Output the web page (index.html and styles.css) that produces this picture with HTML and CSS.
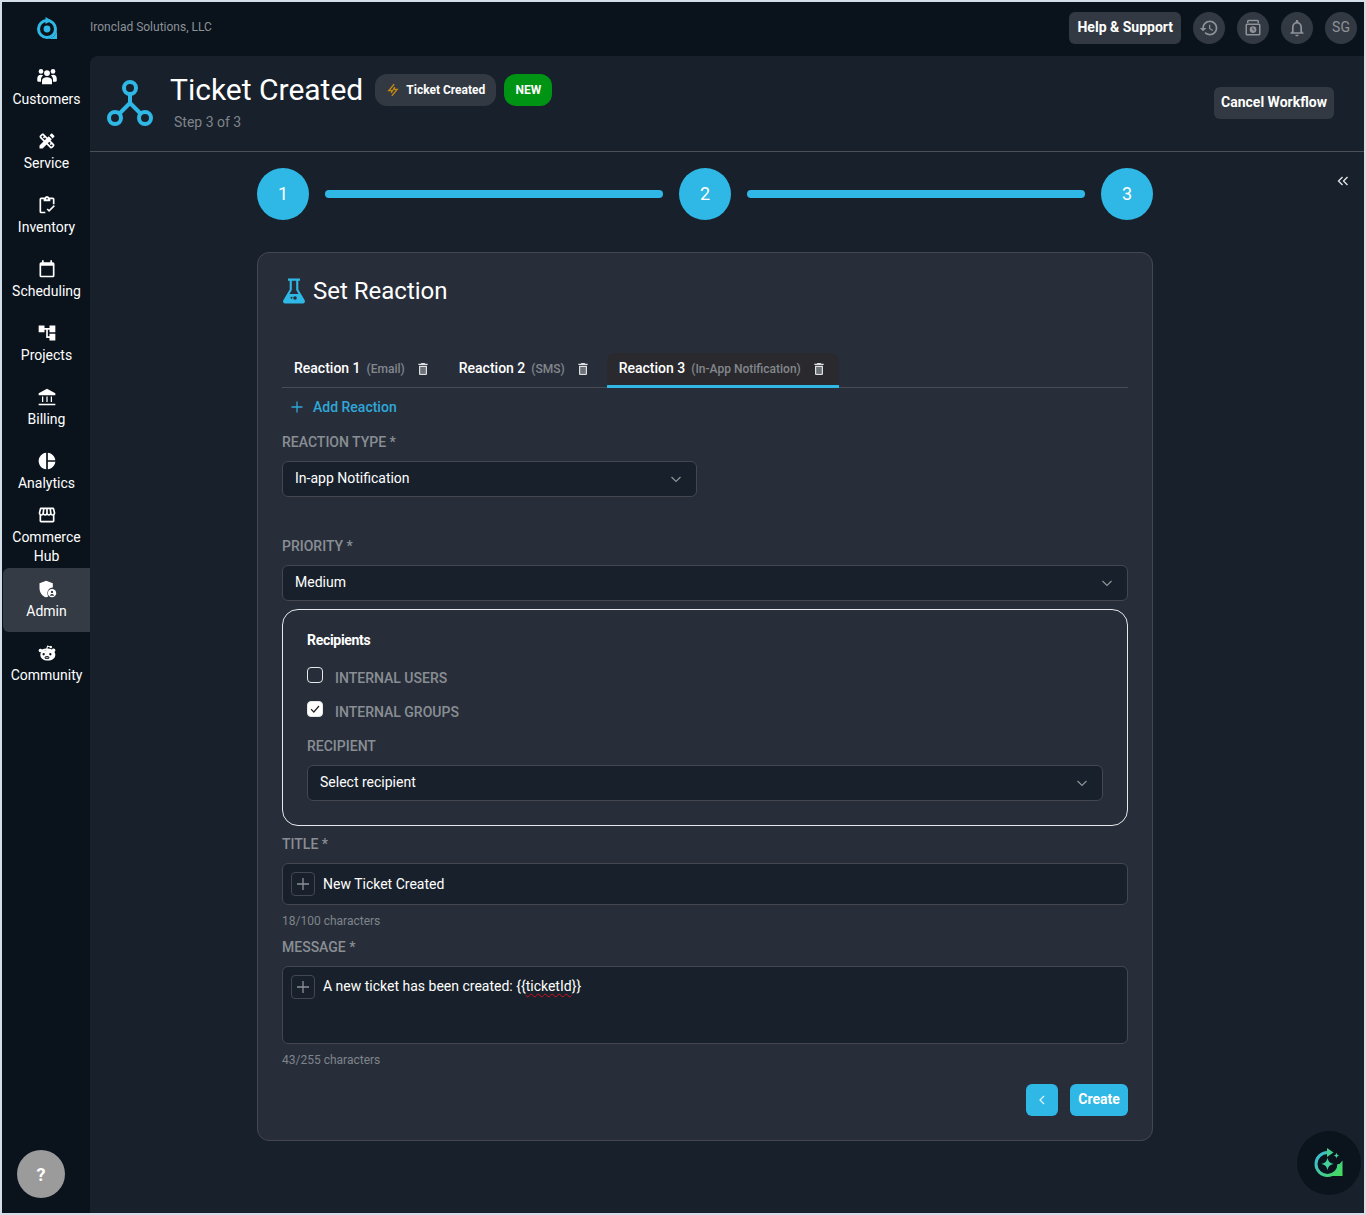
FILE: index.html
```html
<!DOCTYPE html>
<html lang="en">
<head>
<meta charset="utf-8">
<title>Ticket Created</title>
<link rel="stylesheet" href="styles.css">
</head>
<body>
<div class="app">
  <aside class="sidebar">
    <div class="logo">
      <svg width="24" height="26" viewBox="0 0 24 26"><circle cx="12" cy="13" r="8.500" fill="none" stroke="#2fb8e6" stroke-width="3"/><circle cx="12" cy="13" r="3.400" fill="#2fb8e6"/><path d="M10.500 1 16.500 4.500 10.500 8z" fill="#2fb8e6"/><path d="M22 13V23H12a10 10 0 0 0 10-10z" fill="#2fb8e6"/></svg>
    </div>
    <nav class="nav">
      <a class="nav-item nav-item-up"><svg class="nav-icon" viewBox="0 0 24 24"><circle cx="12" cy="8.500" r="3.500"/><circle cx="4.800" cy="6.500" r="2.800"/><circle cx="19.200" cy="6.500" r="2.800"/><path d="M12 13.500c3 0 6 1.500 6 4v4.500H6v-4.500c0-2.500 3-4 6-4z"/><path d="M4.500 10.500c1 0 2 .3 2.900.9C5.800 12.500 4.800 14 4.800 16v3H1.800A1.500 1.500 0 0 1 .3 17.500V15c0-2.600 1.800-4.500 4.200-4.500zM19.500 10.500c-1 0-2 .3-2.900.9 1.600 1.100 2.600 2.600 2.600 4.600v3h3a1.500 1.500 0 0 0 1.500-1.500V15c0-2.600-1.800-4.500-4.200-4.500z"/></svg><span>Customers</span></a>
      <a class="nav-item"><svg class="nav-icon" viewBox="0 0 24 24"><path d="M16.240 11.510l1.570-1.570-3.750-3.750-1.570 1.570-4.140-4.130c-.78-.78-2.050-.78-2.830 0l-1.900 1.900c-.78.78-.78 2.050 0 2.830l4.130 4.130L3 17.250V21h3.750l4.760-4.760 4.130 4.130c.95.95 2.230.6 2.830 0l1.900-1.900c.78-.78.78-2.050 0-2.830l-4.130-4.130zm-7.060-.44L5.040 6.940l1.890-1.900L8.200 6.310 7.020 7.500l1.410 1.410 1.190-1.190 1.450 1.450-1.890 1.900zm7.880 7.890l-4.130-4.130 1.900-1.900 1.450 1.450-1.190 1.190 1.410 1.410 1.190-1.190 1.270 1.270-1.900 1.900zM20.710 7.040c.39-.39.39-1.020 0-1.410l-2.340-2.340c-.47-.47-1.120-.29-1.410 0l-1.830 1.830 3.750 3.750 1.830-1.830z"/></svg><span>Service</span></a>
      <a class="nav-item"><svg class="nav-icon" viewBox="0 0 24 24"><path d="M10 20H5V5h3v2.500h8V5h3v6h2V5a2 2 0 0 0-2-2h-4.200a3 3 0 0 0-5.600 0H5a2 2 0 0 0-2 2v15a2 2 0 0 0 2 2h5z"/><circle cx="12" cy="4.500" r="1" fill="#0a131c"/><path d="m14.500 20.500-3-3 1.400-1.400 1.600 1.600 5.600-5.600 1.400 1.400z"/></svg><span>Inventory</span></a>
      <a class="nav-item"><svg class="nav-icon" viewBox="0 0 24 24"><path d="M19 4h-1V1.500h-2V4H8V1.500H6V4H5a2 2 0 0 0-2 2v14a2 2 0 0 0 2 2h14a2 2 0 0 0 2-2V6a2 2 0 0 0-2-2zm0 16H5V8h14z"/></svg><span>Scheduling</span></a>
      <a class="nav-item"><svg class="nav-icon" viewBox="0 0 24 24"><path d="M22 11V3h-7v3H9V3H2v8h7V8h2v10h4v3h7v-8h-7v3h-2V8h2v3z"/></svg><span>Projects</span></a>
      <a class="nav-item"><svg class="nav-icon" viewBox="0 0 24 24"><path d="M12 2 2 7.500V10h20V7.500zM6 11.500h1.500V18H6zm5.250 0h1.500V18h-1.500zm5.250 0H18V18h-1.500zM2 20h20v1.800H2z"/></svg><span>Billing</span></a>
      <a class="nav-item"><svg class="nav-icon" viewBox="0 0 24 24"><path d="M11 2v20c-5.070-.5-9-4.790-9-10s3.930-9.500 9-10zm2.030 0v8.990H22c-.47-4.740-4.240-8.520-8.970-8.990zm0 11.010V22c4.740-.47 8.500-4.250 8.970-8.990h-8.970z"/></svg><span>Analytics</span></a>
      <a class="nav-item"><svg class="nav-icon" viewBox="0 0 24 24"><path d="M21.900 8.890l-1.050-4.370c-.22-.9-1-1.520-1.910-1.520H5.050c-.9 0-1.690.63-1.900 1.520L2.100 8.890c-.24 1.020-.02 2.060.62 2.880.08.11.19.19.28.29V19c0 1.100.9 2 2 2h14c1.100 0 2-.9 2-2v-6.940c.09-.09.2-.18.28-.28.64-.82.87-1.870.62-2.890zm-2.990-3.900l1.050 4.370c.1.42.01.84-.25 1.170-.14.18-.44.47-.94.47-.61 0-1.140-.49-1.210-1.140L16.980 5l1.930-.01zM13 5h1.960l.54 4.520c.05.39-.07.78-.33 1.070-.22.26-.54.41-.95.41-.67 0-1.220-.59-1.220-1.310V5zM8.490 9.520L9.040 5H11v4.690c0 .72-.55 1.310-1.310 1.310-.34 0-.65-.15-.89-.41-.25-.29-.37-.68-.31-1.070zm-4.450-.16L5.050 5h1.970l-.58 4.860c-.08.65-.6 1.140-1.210 1.140-.49 0-.8-.29-.93-.47-.27-.32-.36-.75-.26-1.170zM5 19v-6.030c.08.01.15.03.23.03.87 0 1.660-.36 2.240-.95.6.6 1.400.95 2.310.95.87 0 1.650-.36 2.230-.93.59.57 1.390.93 2.290.93.84 0 1.640-.35 2.240-.95.58.59 1.370.95 2.240.95.08 0 .15-.02.23-.03V19H5z"/></svg><span>Commerce Hub</span></a>
      <a class="nav-item nav-item-active"><svg class="nav-icon" viewBox="0 0 24 24"><path d="M11 2 3 5v6c0 5 3.400 9.700 8 11 .9-.25 1.700-.65 2.500-1.150A7 7 0 0 1 19 10.100V5z"/><circle cx="18" cy="17" r="5"/><circle cx="18" cy="15.500" r="1.400" fill="#343b44"/><path d="M15.500 20c.3-1.300 1.300-2 2.500-2s2.200.7 2.500 2z" fill="#343b44"/></svg><span>Admin</span></a>
      <a class="nav-item"><svg class="nav-icon" viewBox="0 -2 24 24"><path d="M12 7c-3 0-5.500.8-7.300 2.100A2.200 2.200 0 0 1 2 6.500a2.200 2.200 0 0 1 4-.7c1.500-.7 3.200-1 5.200-1.100l1-3.700 3.300.8a1.500 1.500 0 1 1-.4 1.300l-2-.5-.6 2.100c2 .1 3.800.5 5.400 1.100a2.200 2.200 0 1 1 3 2.900c.7 1 1.100 2.100 1.100 3.300 0 4.300-4 7-9 7s-9-2.700-9-7c0-1 .3-2 .9-2.900C6.500 7.900 9 7 12 7z"/><circle cx="8" cy="11.500" r="1.400" fill="#0a131c"/><circle cx="16" cy="11.500" r="1.400" fill="#0a131c"/><ellipse cx="12" cy="15.500" rx="3" ry="1.800" fill="#0a131c"/><circle cx="11" cy="15.500" r=".7"/><circle cx="13" cy="15.500" r=".7"/></svg><span>Community</span></a>
    </nav>
    <button class="help-fab">?</button>
  </aside>
  <div class="column">
    <header class="topbar">
      <span class="company">Ironclad Solutions, LLC</span>
      <div class="topbar-actions">
        <button class="btn-dark">Help &amp; Support</button>
        <span class="round"><svg width="20" height="20" viewBox="0 0 24 24"><path d="M13 3c-4.970 0-9 4.030-9 9H1l3.890 3.890.07.14L9 12H6c0-3.870 3.130-7 7-7s7 3.130 7 7-3.130 7-7 7c-1.930 0-3.680-.79-4.940-2.060l-1.420 1.420C8.270 19.990 10.510 21 13 21c4.970 0 9-4.030 9-9s-4.030-9-9-9zm-1 5v5l4.280 2.540.72-1.210-3.500-2.080V8H12z"/></svg></span>
        <span class="round"><svg width="18" height="18" viewBox="0 0 24 24"><path d="M6 1h12a2 2 0 0 1 2 2v2.200h-2V3H6v2.200H4V3a2 2 0 0 1 2-2zM4 6h16a2 2 0 0 1 2 2v12a2 2 0 0 1-2 2H4a2 2 0 0 1-2-2V8a2 2 0 0 1 2-2zm0 2v12h16V8zm8 1.500a4.500 4.500 0 1 1 0 9 4.500 4.500 0 0 1 0-9zm-.6 1.800v3l2.300 1.300.5-.9-1.700-1v-2.400z"/></svg></span>
        <span class="round"><svg width="20" height="20" viewBox="0 0 24 24"><path d="M12 22c1.100 0 2-.9 2-2h-4c0 1.100.9 2 2 2zm6-6v-5c0-3.070-1.630-5.640-4.500-6.320V4c0-.83-.67-1.500-1.500-1.500s-1.500.67-1.500 1.500v.68C7.640 5.360 6 7.920 6 11v5l-2 2v1h16v-1l-2-2zm-2 1H8v-6c0-2.480 1.510-4.500 4-4.500s4 2.020 4 4.500v6z"/></svg></span>
        <span class="round round-text">SG</span>
      </div>
    </header>
    <main class="main">
      <section class="page-head">
        <svg class="flow-icon" width="48" height="48" viewBox="0 0 48 48" fill="none" stroke="#2fb8e6" stroke-width="4"><circle cx="24" cy="9" r="6"/><circle cx="9" cy="39" r="6"/><circle cx="39" cy="39" r="6"/><path d="M24 15v9M24 24 13.500 34.500M24 24l10.500 10.500" stroke-linecap="round"/></svg>
        <div class="head-text">
          <div class="head-row">
            <h1 class="page-title">Ticket Created</h1>
            <span class="badge"><svg width="14" height="14" viewBox="0 0 24 24" fill="none" stroke="#c68a12" stroke-width="2.400"><path d="M14 2 5 13h6l-2 4M10 22l9-11h-6l2-4"/></svg>Ticket Created</span>
            <span class="badge-new">NEW</span>
          </div>
          <div class="step-text">Step 3 of 3</div>
        </div>
        <button class="btn-dark btn-cancel">Cancel Workflow</button>
      </section>
      <div class="body">
        <div class="center">
          <div class="stepper">
            <span class="step">1</span><span class="step-bar"></span><span class="step">2</span><span class="step-bar"></span><span class="step">3</span>
          </div>
          <section class="card">
            <div class="card-head">
              <svg width="24" height="28" viewBox="0 0 24 28"><path d="M6 1.500h12v2.300h-1.700v8.700l6.400 10.800c.8 1.500-.2 3.200-1.900 3.200H3.200c-1.700 0-2.700-1.700-1.900-3.200L7.700 12.500V3.800H6zm3.800 2.300v9.300L7.500 17h9l-2.300-3.900V3.800z" fill="#2fb8e6"/><circle cx="9.500" cy="20.800" r="1" fill="#272e3a"/><circle cx="13" cy="21" r="1.800" fill="#272e3a"/></svg>
              <h2 class="card-title">Set Reaction</h2>
            </div>
            <div class="tabs">
              <div class="tab"><b>Reaction 1</b><i>(Email)</i><svg class="trash" viewBox="0 0 24 24"><path d="M8 9h8v10H8z" fill="#6d7178"/><path d="M6 19c0 1.100.9 2 2 2h8c1.100 0 2-.9 2-2V7H6v12zM8 9h8v10H8V9zm7.500-5l-1-1h-5l-1 1H5v2h14V4z"/></svg></div>
              <div class="tab"><b>Reaction 2</b><i>(SMS)</i><svg class="trash" viewBox="0 0 24 24"><path d="M8 9h8v10H8z" fill="#6d7178"/><path d="M6 19c0 1.100.9 2 2 2h8c1.100 0 2-.9 2-2V7H6v12zM8 9h8v10H8V9zm7.500-5l-1-1h-5l-1 1H5v2h14V4z"/></svg></div>
              <div class="tab tab-active"><b>Reaction 3</b><i>(In-App Notification)</i><svg class="trash" viewBox="0 0 24 24"><path d="M8 9h8v10H8z" fill="#6d7178"/><path d="M6 19c0 1.100.9 2 2 2h8c1.100 0 2-.9 2-2V7H6v12zM8 9h8v10H8V9zm7.500-5l-1-1h-5l-1 1H5v2h14V4z"/></svg></div>
            </div>
            <div class="add-reaction"><svg width="14" height="14" viewBox="0 0 14 14" stroke="#2fa8d8" stroke-width="1.300"><path d="M7 1.500v11M1.500 7h11"/></svg><span>Add Reaction</span></div>
            <div class="field field-first">
              <label class="field-label">REACTION TYPE *</label>
              <div class="select select-short"><span>In-app Notification</span><svg class="chevron" viewBox="0 0 12 12"><path d="m1.500 4 4.500 4.500L10.500 4"/></svg></div>
            </div>
            <div class="field field-gap">
              <label class="field-label">PRIORITY *</label>
              <div class="select"><span>Medium</span><svg class="chevron" viewBox="0 0 12 12"><path d="m1.500 4 4.500 4.500L10.500 4"/></svg></div>
            </div>
            <div class="recipients">
              <div class="recipients-title">Recipients</div>
              <div class="check-row check-row-first"><span class="check"></span><span class="check-label">INTERNAL USERS</span></div>
              <div class="check-row"><span class="check check-on"><svg width="12" height="12" viewBox="0 0 12 12" fill="none" stroke="#222" stroke-width="1.200"><path d="m2 6.200 2.800 2.800L10 3"/></svg></span><span class="check-label">INTERNAL GROUPS</span></div>
              <div class="field field-inner">
                <label class="field-label">RECIPIENT</label>
                <div class="select"><span>Select recipient</span><svg class="chevron" viewBox="0 0 12 12"><path d="m1.500 4 4.500 4.500L10.500 4"/></svg></div>
              </div>
            </div>
            <div class="field">
              <label class="field-label">TITLE *</label>
              <div class="input"><span class="plus"><svg width="12" height="12" viewBox="0 0 12 12" stroke="#8d9196" stroke-width="1.300"><path d="M6 0v12M0 6h12"/></svg></span><span class="input-text">New Ticket Created</span></div>
              <div class="count">18/100 characters</div>
            </div>
            <div class="field">
              <label class="field-label">MESSAGE *</label>
              <div class="input input-tall"><span class="plus"><svg width="12" height="12" viewBox="0 0 12 12" stroke="#8d9196" stroke-width="1.300"><path d="M6 0v12M0 6h12"/></svg></span><span class="input-text">A new ticket has been created: {{<span class="misspelt">ticketId</span>}}</span></div>
              <div class="count">43/255 characters</div>
            </div>
            <div class="actions">
              <button class="btn-blue btn-back"><svg width="12" height="12" viewBox="0 0 12 12" fill="none" stroke="#dff4fb" stroke-width="1.300"><path d="M8 2 4 6l4 4"/></svg></button>
              <button class="btn-blue">Create</button>
            </div>
          </section>
        </div>
        <div class="rail"><svg width="12" height="12" viewBox="0 0 12 12" fill="none" stroke="#e6e8ea" stroke-width="1.300"><path d="M5.500 2 1.500 6l4 4M10.500 2l-4 4 4 4"/></svg></div>
      </div>
      <button class="assist-fab"><svg width="32" height="32" viewBox="0 0 32 32"><defs><linearGradient id="ag" gradientUnits="userSpaceOnUse" x1="2" y1="5" x2="29" y2="29"><stop offset="0" stop-color="#3bb8e0"/><stop offset="1" stop-color="#45dd55"/></linearGradient></defs><path d="M14.500 5.500A11.500 11.500 0 1 0 26 17" fill="none" stroke="url(#ag)" stroke-width="3"/><path d="M29.500 13.500V29H14.500a12 12 0 0 0 12-12z" fill="url(#ag)"/><path d="M14 1 20.500 5.500 14 10z" fill="#43cf8f"/><path d="M14.500 10.500c.7 4 2.300 5.700 6.300 6.400-4 .7-5.600 2.300-6.300 6.300-.7-4-2.300-5.600-6.300-6.300 4-.7 5.600-2.400 6.300-6.400z" fill="#43d39a"/><path d="M23.500 5.500c.3 2 1.100 2.800 3.100 3.100-2 .3-2.800 1.100-3.100 3.100-.3-2-1.100-2.800-3.100-3.100 2-.3 2.800-1.100 3.100-3.100z" fill="#43d39a"/></svg></button>
    </main>
  </div>
</div>
</body>
</html>
```
FILE: styles.css
```css
* { box-sizing: border-box; }
html, body { margin: 0; height: 100%; }
body {
  font-family: Roboto, "Liberation Sans", sans-serif;
  font-size: 14px;
  color: #fff;
  background: #d3dee8;
  overflow: hidden;
}
button { font-family: inherit; border: 0; cursor: pointer; }
h1, h2 { margin: 0; font-weight: 400; }

.app {
  display: flex;
  width: 1366px;
  height: 1215px;
  border: 2px solid #d3dee8;
  background: #0a131c;
}

/* Sidebar */
.sidebar {
  width: 88px;
  flex: none;
  display: flex;
  flex-direction: column;
  background: #0a131c;
}
.logo {
  height: 54px;
  display: flex;
  align-items: center;
  justify-content: center;
  padding: 0 0 0 2px;
}
.nav { display: flex; flex-direction: column; }
.nav-item {
  height: 64px;
  display: flex;
  flex-direction: column;
  align-items: center;
  justify-content: center;
  gap: 3px;
  padding-left: 1px;
  text-align: center;
  line-height: 19px;
  color: #fff;
}
.nav-item span { width: 76px; }
.nav-item-active { background: #343b44; border-radius: 6px 0 0 6px; margin-left: 1px; padding-left: 0; }
.nav-icon { width: 20px; height: 20px; margin-top: -1px; fill: #fff; flex: none; }
.nav-item-up .nav-icon { margin-top: -2px; margin-bottom: 1px; }
.help-fab {
  margin: auto 0 15px 15px;
  width: 48px;
  height: 48px;
  border-radius: 50%;
  background: #9b9b9b;
  color: #fff;
  font-size: 18px;
  font-weight: 700;
  padding: 0;
}

/* Top bar */
.column { flex: 1; min-width: 0; display: flex; flex-direction: column; }
.topbar {
  height: 54px;
  flex: none;
  display: flex;
  align-items: center;
  justify-content: space-between;
  padding: 0 7px 2px 0;
  background: #0a131c;
}
.company { font-size: 12px; color: #8c9197; padding-bottom: 2px; }
.topbar-actions { display: flex; align-items: center; gap: 12px; }
.btn-dark {
  height: 32px;
  padding: 0 8px 2px;
  border-radius: 6px;
  background: #323942;
  color: #fff;
  font-size: 14px;
  font-weight: 700;
}
.round {
  width: 32px;
  height: 32px;
  border-radius: 50%;
  background: #323942;
  display: flex;
  align-items: center;
  justify-content: center;
  fill: #8f9398;
  color: #8f9398;
}
.round-text { font-size: 14px; padding-bottom: 2px; }

/* Main */
.main {
  position: relative;
  flex: 1;
  display: flex;
  flex-direction: column;
  background: #18212b;
  border-radius: 8px 0 0 0;
}
.page-head {
  height: 96px;
  flex: none;
  display: flex;
  align-items: flex-start;
  padding: 18px 30px 0 16px;
  border-bottom: 1px solid #4b4f58;
}
.flow-icon { margin-top: 5px; flex: none; }
.head-text { margin-left: 16px; }
.head-row { display: flex; align-items: center; gap: 8px; height: 32px; }
.page-title { font-size: 30px; line-height: 32px; margin-right: 4px; }
.badge {
  height: 32px;
  display: flex;
  align-items: center;
  gap: 6px;
  padding: 0 11px;
  border-radius: 12px;
  background: #323942;
  font-size: 12px;
  font-weight: 700;
}
.badge-new {
  height: 32px;
  width: 48px;
  display: flex;
  align-items: center;
  justify-content: center;
  border-radius: 12px;
  background: #009414;
  font-size: 12px;
  font-weight: 700;
}
.step-text { margin: 6px 0 0 4px; line-height: 20px; color: #7f848a; }
.btn-cancel { margin: 13px 0 0 auto; width: 120px; padding: 0 0 2px; }

.body { flex: 1; display: flex; }
.center { flex: 1; display: flex; flex-direction: column; align-items: center; padding-top: 16px; }
.rail { width: 44px; flex: none; padding: 22px 0 0 17px; }

.stepper { width: 896px; display: flex; align-items: center; gap: 16px; }
.step {
  width: 52px;
  height: 52px;
  flex: none;
  padding-bottom: 2px;
  border-radius: 50%;
  background: #2fb8e6;
  display: flex;
  align-items: center;
  justify-content: center;
  font-size: 18px;
}
.step-bar { flex: 1; height: 8px; border-radius: 4px; background: #2fb8e6; }

/* Card */
.card {
  width: 896px;
  margin-top: 32px;
  padding: 24px;
  background: #272e3a;
  border: 1px solid #44474f;
  border-radius: 12px;
}
.card-head { display: flex; align-items: center; gap: 7px; height: 28px; }
.card-title { font-size: 24px; line-height: 28px; }

.tabs {
  margin-top: 48px;
  height: 35px;
  display: flex;
  gap: 5px;
  border-bottom: 1px solid #4a4d55;
}
.tab {
  height: 35px;
  display: flex;
  align-items: center;
  padding: 0 11px 5px 12px;
  border-radius: 8px 8px 0 0;
}
.tab b { font-weight: 500; }
.tab i { font-style: normal; font-weight: 500; font-size: 12px; color: #83878d; margin: 1px 0 0 6px; }
.trash { width: 16px; height: 16px; fill: #dcdee0; margin: 1px 0 0 10px; flex: none; }
.tab-active { background: #2a2a2e; border-bottom: 3px solid #2fb8e6; padding: 0 12px 2px; }

.add-reaction {
  margin-top: 7px;
  height: 24px;
  display: flex;
  align-items: center;
  gap: 9px;
  padding-left: 8px;
  font-weight: 500;
  color: #2fa8d8;
}

.field { margin-top: 8px; }
.field-first { margin-top: 13px; }
.field-gap { margin-top: 39px; }
.field-inner { margin-top: 14px; }
.field-label {
  display: block;
  margin-bottom: 9px;
  line-height: 20px;
  font-weight: 500;
  color: #8a8e94;
}
.select, .input {
  background: #18212b;
  border: 1px solid #44474f;
  border-radius: 6px;
}
.select {
  height: 36px;
  display: flex;
  align-items: center;
  justify-content: space-between;
  padding: 0 14px 0 12px;
}
.select span { padding-bottom: 2px; }
.select-short { width: 415px; }
.chevron { width: 12px; height: 12px; fill: none; stroke: #8f9398; stroke-width: 1.200; }

.recipients {
  margin-top: 8px;
  padding: 20px 24px 24px;
  border: 1px solid #e6e8ea;
  border-radius: 16px;
}
.recipients-title { line-height: 20px; font-weight: 700; letter-spacing: -.3px; }
.check-row { display: flex; align-items: flex-start; gap: 12px; height: 20px; margin-top: 14px; }
.check-row-first { margin-top: 18px; }
.check {
  width: 16px;
  height: 16px;
  margin-top: -1px;
  border: 1px solid #e6e8ea;
  border-radius: 4px;
  display: flex;
  align-items: center;
  justify-content: center;
}
.check-on { background: #fff; }
.check-label { line-height: 20px; font-weight: 500; color: #8a8e94; }

.input { height: 42px; display: flex; align-items: center; gap: 8px; padding-left: 8px; }
.input-tall { height: 78px; align-items: flex-start; padding-top: 8px; }
.input-tall .input-text { line-height: 22px; }
.plus {
  width: 24px;
  height: 24px;
  flex: none;
  border: 1px solid #44474f;
  border-radius: 4px;
  display: flex;
  align-items: center;
  justify-content: center;
}
.misspelt { text-decoration: underline wavy #d0101e 1px; text-underline-offset: 2px; }
.count { margin-top: 8px; font-size: 12px; line-height: 16px; color: #7f848a; }

.actions { margin-top: 16px; display: flex; justify-content: flex-end; gap: 12px; }
.btn-blue {
  height: 32px;
  width: 58px;
  padding: 0 0 2px;
  border-radius: 6px;
  background: #2fb8e6;
  color: #fff;
  font-size: 14px;
  font-weight: 700;
}
.btn-back { width: 32px; padding: 0; display: flex; align-items: center; justify-content: center; }

.assist-fab {
  position: absolute;
  right: 3px;
  bottom: 18px;
  width: 64px;
  height: 64px;
  padding: 0;
  border-radius: 50%;
  background: #0b131c;
  display: flex;
  align-items: center;
  justify-content: center;
}
```
